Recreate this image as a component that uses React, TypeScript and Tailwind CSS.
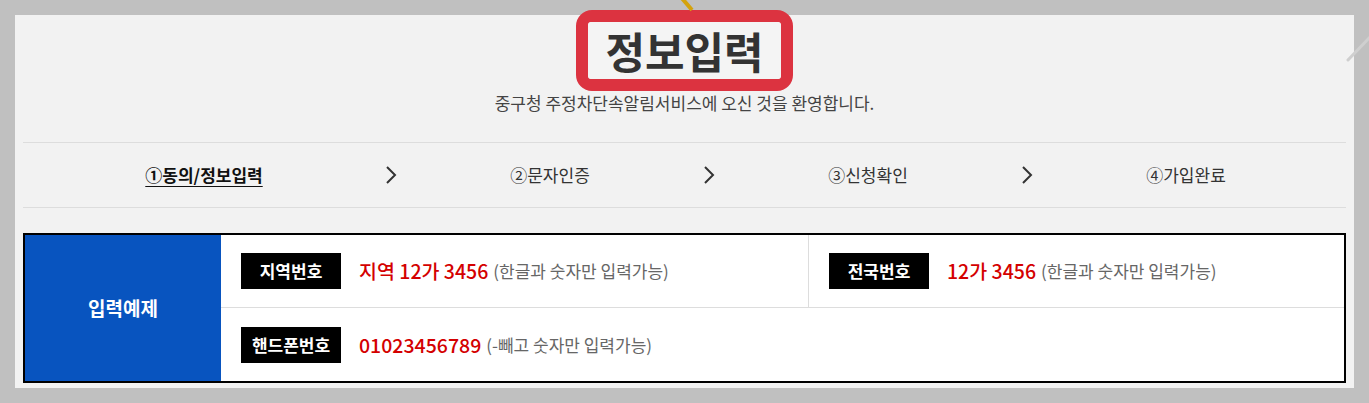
import React from "react";

const font = { fontFamily: '"Noto Sans CJK KR", "Noto Sans", sans-serif' };

function Chevron() {
  return (
    <svg width="12" height="18" viewBox="0 0 12 18" className="mx-auto">
      <polyline points="2,1 10,9 2,17" fill="none" stroke="#333" strokeWidth="2" />
    </svg>
  );
}

function Badge({ children }: { children: React.ReactNode }) {
  return (
    <span className="inline-flex h-[36px] w-[100px] shrink-0 items-center justify-center bg-black text-[17px] font-bold text-white">
      {children}
    </span>
  );
}

function Example({ label, value, hint }: { label: string; value: string; hint: string }) {
  return (
    <div className="flex items-center pl-[20px]">
      <Badge>{label}</Badge>
      <span className="ml-[18px] text-[19.5px] font-medium text-[#d40000]">{value}</span>
      <span className="ml-[5px] text-[17px] text-[#666]">{hint}</span>
    </div>
  );
}

export default function App() {
  return (
    <div className="relative h-[403px] w-full overflow-hidden bg-[#c0c0c0] px-[15px] pt-[15px]" style={font}>
      <svg className="absolute left-[676px] top-0" width="24" height="16" viewBox="0 0 24 16">
        <line x1="4" y1="-4" x2="16" y2="10" stroke="#d4a20c" strokeWidth="4" />
      </svg>
      <svg className="absolute left-[1340px] top-[30px]" width="29" height="34" viewBox="0 0 29 34">
        <line x1="31" y1="6" x2="8" y2="30" stroke="#cfcfcf" strokeWidth="3" strokeLinecap="round" />
      </svg>
      <div className="h-[373px] bg-[#f2f2f2] px-[8px]">
        <div className="flex flex-col items-center">
          <div className="-mt-[5px] h-[81px] w-[217px] rounded-[16px] border-[12px] border-[#dc3340] bg-[#f4f4f4]">
            <div className="flex h-full items-center justify-center rounded-[3px] bg-[#f4f4f4] text-[43px] font-bold leading-none text-[#333]">
              정보입력
            </div>
          </div>
          <p className="mt-0 text-[17px] leading-[24px] text-[#444]">
            중구청 주정차단속알림서비스에 오신 것을 환영합니다.
          </p>
        </div>
        <div className="mt-[27px] grid h-[66px] grid-cols-[362px_12px_306px_12px_306px_12px_306px] items-center border-y border-[#dddddd] text-[17px] text-[#333]">
          <div className="text-center font-bold text-[#111] underline underline-offset-[4px]">①동의/정보입력</div>
          <Chevron />
          <div className="text-center">②문자인증</div>
          <Chevron />
          <div className="text-center">③신청확인</div>
          <Chevron />
          <div className="text-center">④가입완료</div>
        </div>
        <div className="mt-[25px] flex h-[150px] border-2 border-black">
          <div className="flex w-[196px] shrink-0 items-center justify-center bg-[#0854bf] text-[19px] font-bold text-white">
            입력예제
          </div>
          <div className="flex flex-1 flex-col bg-white">
            <div className="grid h-[73px] grid-cols-[588px_1fr] border-b border-[#dddddd]">
              <div className="flex items-center border-r border-[#dddddd]">
                <Example label="지역번호" value="지역 12가 3456" hint="(한글과 숫자만 입력가능)" />
              </div>
              <div className="flex items-center">
                <Example label="전국번호" value="12가 3456" hint="(한글과 숫자만 입력가능)" />
              </div>
            </div>
            <div className="flex flex-1 items-center">
              <Example label="핸드폰번호" value="01023456789" hint="(-빼고 숫자만 입력가능)" />
            </div>
          </div>
        </div>
      </div>
    </div>
  );
}
